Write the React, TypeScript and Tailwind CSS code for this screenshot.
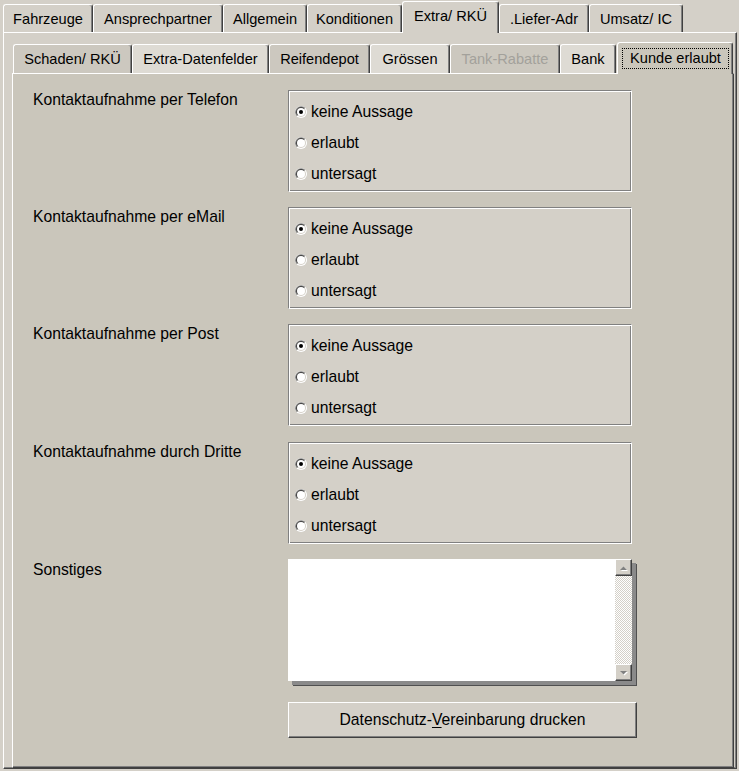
import React from "react";

const topTabs = [
  { name: "Fahrzeuge", w: "w-[90px]" },
  { name: "Ansprechpartner", w: "w-[130px]" },
  { name: "Allgemein", w: "w-[84px]" },
  { name: "Konditionen", w: "w-[95px]" },
  { name: "Extra/ RKÜ", w: "w-[97px]", active: true },
  { name: ".Liefer-Adr", w: "w-[90px]" },
  { name: "Umsatz/ IC", w: "w-[94px]" },
];

const subTabs = [
  { name: "Schaden/ RKÜ", w: "w-[119px]", bg: "bg-[#ccc8bf]" },
  { name: "Extra-Datenfelder", w: "w-[137px]", bg: "bg-[#dedbd4]" },
  { name: "Reifendepot", w: "w-[101px]", bg: "bg-[#ccc8bf]" },
  { name: "Grössen", w: "w-[80px]", bg: "bg-[#dedbd4]" },
  { name: "Tank-Rabatte", w: "w-[110px]", bg: "bg-[#ccc8bf]", disabled: true },
  { name: "Bank", w: "w-[56px]", bg: "bg-[#dedbd4]" },
];

const groups = [
  "Kontaktaufnahme per Telefon",
  "Kontaktaufnahme per eMail",
  "Kontaktaufnahme per Post",
  "Kontaktaufnahme durch Dritte",
];

const options = ["keine Aussage", "erlaubt", "untersagt"];

function Radio({ checked }: { checked?: boolean }) {
  return (
    <svg width="12" height="12" viewBox="0 0 12 12" className="shrink-0">
      <circle cx="6" cy="6" r="6" fill="#ffffff" />
      <path d="M1.76 10.24 A6 6 0 0 1 10.24 1.76 Z" fill="#808080" />
      <circle cx="6" cy="6" r="5" fill="#d4d0c8" />
      <path d="M2.46 9.54 A5 5 0 0 1 9.54 2.46 Z" fill="#404040" />
      <circle cx="6" cy="6" r="4" fill="#ffffff" />
      {checked && <circle cx="6" cy="6" r="2" fill="#000000" />}
    </svg>
  );
}

function Arrow({ up }: { up?: boolean }) {
  return (
    <svg width="9" height="6" viewBox="0 0 9 6">
      {up ? (
        <>
          <path d="M1 5 L8 5 L4.5 1.5 Z" fill="#ffffff" transform="translate(1 1)" />
          <path d="M1 5 L8 5 L4.5 1.5 Z" fill="#808080" />
        </>
      ) : (
        <>
          <path d="M1 1 L8 1 L4.5 4.5 Z" fill="#ffffff" transform="translate(1 1)" />
          <path d="M1 1 L8 1 L4.5 4.5 Z" fill="#808080" />
        </>
      )}
    </svg>
  );
}

function GroupBox() {
  return (
    <div className="w-[344px] h-[102px] bg-[#d4d0c8] border border-t-[#808080] border-l-[#808080] border-r-white border-b-white shadow-[inset_1px_1px_0_#ffffff,inset_-1px_-1px_0_#808080] pt-[5px] pl-[6px] flex flex-col">
      {options.map((o, i) => (
        <div key={o} className="h-[31px] flex items-center gap-[4px]">
          <Radio checked={i === 0} />
          <span>{o}</span>
        </div>
      ))}
    </div>
  );
}

export default function App() {
  return (
    <div className="w-[739px] h-[771px] bg-[#d4d0c8] text-black text-[14.6px] overflow-hidden" style={{ fontFamily: '"Liberation Sans", Arial, sans-serif' }}>
      {/* main tabs */}
      <div className="flex items-end h-[32px] pl-[3px]">
        {topTabs.map((t) =>
          t.active ? (
            <div
              key={t.name}
              className={`${t.w} h-[32px] mb-[-1px] relative z-10 bg-[#d4d0c8] border-t border-l border-white border-r border-r-[#404040] shadow-[inset_-1px_0_0_#808080] rounded-t-[3px] flex items-center justify-center pb-[2px]`}
            >
              {t.name}
            </div>
          ) : (
            <div
              key={t.name}
              className={`${t.w} h-[28px] bg-[#d4d0c8] border-t border-l border-white border-r border-r-[#404040] shadow-[inset_-1px_0_0_#808080] rounded-t-[3px] flex items-center justify-center pt-[2px]`}
            >
              {t.name}
            </div>
          )
        )}
      </div>

      {/* outer panel */}
      <div className="ml-[3px] w-[734px] h-[737px] bg-[#d4d0c8] border-t border-l border-white border-r border-b border-r-[#404040] border-b-[#404040] shadow-[inset_-1px_-1px_0_#808080] pl-[8px] pt-[9px]">
        {/* sub tabs */}
        <div className="flex items-end h-[31px] pl-[1px]">
          {subTabs.map((t) => (
            <div
              key={t.name}
              className={`${t.w} ${t.bg} h-[29px] border-t border-l border-white border-r border-r-[#404040] shadow-[inset_-1px_0_0_#808080] rounded-t-[3px] flex items-center justify-center pt-[2px] ${t.disabled ? "text-[#a3a19b]" : ""}`}
            >
              {t.name}
            </div>
          ))}
          <div className="w-[116px] h-[32px] mb-[-1px] ml-[1px] relative z-10 bg-[#cac6bb] border-t border-l border-white border-r border-r-[#404040] shadow-[inset_-1px_0_0_#808080] rounded-t-[3px] pt-[5px] pl-[4px] pr-[3px]">
            <div className="h-[21px] border border-dotted border-black flex items-center justify-center">Kunde erlaubt</div>
          </div>
        </div>

        {/* inner panel */}
        <div className="w-[722px] h-[695px] bg-[#cac6bb] border-t border-l border-white border-r border-b border-r-[#404040] border-b-[#404040] shadow-[inset_-1px_-1px_0_#808080] pl-[20px] pt-[16px] flex flex-col gap-[15px] text-[15.7px]">
          {groups.map((g, i) => (
            <div key={g} className={`flex ${i === 3 ? "mt-[1px]" : ""}`}>
              <div className="w-[255px] leading-[18px] pt-[1px]">{g}</div>
              <GroupBox />
            </div>
          ))}

          <div className="flex">
            <div className="w-[255px] leading-[18px] pt-[2px]">Sonstiges</div>
            <div className="flex flex-col">
              <div className="w-[344px] h-[122px] bg-white flex justify-end shadow-[4px_4px_0_#8a8a8a,5px_5px_0_#505050]">
                <div className="w-[17px] h-full flex flex-col">
                  <div className="h-[17px] bg-[#d4d0c8] border-t border-l border-white border-r border-b border-r-[#404040] border-b-[#404040] shadow-[inset_-1px_-1px_0_#808080] flex items-center justify-center">
                    <Arrow up />
                  </div>
                  <div className="flex-1 bg-[repeating-conic-gradient(#d4d0c8_0_25%,#ffffff_0_50%)] bg-[length:2px_2px]" />
                  <div className="h-[17px] bg-[#d4d0c8] border-t border-l border-white border-r border-b border-r-[#404040] border-b-[#404040] shadow-[inset_-1px_-1px_0_#808080] flex items-center justify-center">
                    <Arrow />
                  </div>
                </div>
              </div>
              <button className="mt-[21px] w-[349px] h-[36px] bg-[#d4d0c8] border-t border-l border-white border-r border-b border-r-[#404040] border-b-[#404040] shadow-[inset_-1px_-1px_0_#808080] flex items-center justify-center">
                <span>
                  Datenschutz-<span className="underline underline-offset-2">V</span>ereinbarung drucken
                </span>
              </button>
            </div>
          </div>
        </div>
      </div>
    </div>
  );
}
